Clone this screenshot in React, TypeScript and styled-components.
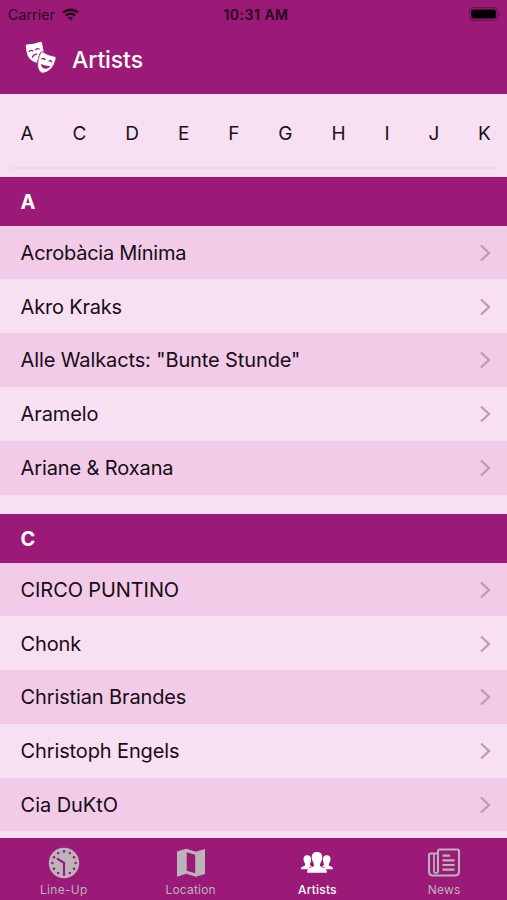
import React from "react";
import styled, { createGlobalStyle } from "styled-components";

const purple = "#9b1a77";
const light = "#f6e0f1";
const rose = "#f1cbe7";
const muted = "#bdb4bb";

const GlobalStyle = createGlobalStyle`
  * { box-sizing: border-box; }
  body { margin: 0; background: ${light}; font-family: Inter, "Liberation Sans", sans-serif; }
`;

const Screen = styled.div`
  display: flex;
  flex-direction: column;
  width: 507px;
  height: 900px;
  overflow: hidden;
  background: ${light};
`;

const StatusBar = styled.div`
  display: grid;
  grid-template-columns: 1fr auto 1fr;
  align-items: center;
  flex: none;
  height: 28px;
  padding: 0 6px 0 8px;
  background: ${purple};
  color: #25051c;
`;

const Carrier = styled.div`
  display: flex;
  align-items: center;
  gap: 7px;
  font-size: 14px;
  letter-spacing: 0.15px;
`;

const Clock = styled.div`
  padding-left: 3px;
  font-size: 14px;
  font-weight: 600;
  letter-spacing: 0.5px;
`;

const Battery = styled.div`
  display: flex;
  justify-content: flex-end;
`;

const TitleBar = styled.header`
  display: flex;
  align-items: center;
  flex: none;
  gap: 14px;
  height: 66px;
  padding: 0 24px 5px;
  background: ${purple};
  color: #fff;
`;

const Title = styled.h1`
  margin: 0;
  padding-top: 2px;
  font-size: 23px;
  font-weight: 500;
  letter-spacing: -0.1px;
`;

const LetterIndex = styled.nav`
  display: flex;
  flex: none;
  justify-content: space-between;
  height: 75px;
  margin: 0 10px 0 11px;
  padding: 25px 6px 0 9.6px;
  border-bottom: 2px solid #efd9e9;
  font-size: 19px;
  line-height: 30px;
  color: #1c0f1a;
`;

const List = styled.main`
  flex: 1;
  min-height: 0;
  padding-top: 8px;
  overflow: hidden;
`;

const Section = styled.section`
  margin-bottom: 19.4px;
`;

const SectionHeader = styled.h2`
  display: flex;
  align-items: center;
  height: 48.7px;
  margin: 0;
  padding: 1px 20.6px 0;
  background: ${purple};
  color: #fff;
  font-size: 20px;
  font-weight: 700;
`;

const ArtistRow = styled.div`
  display: flex;
  align-items: center;
  justify-content: space-between;
  height: 53.78px;
  padding: 0.6px 15.4px 0 20.6px;
  background: ${light};
  &:nth-child(even) { background: ${rose}; }
`;

const ArtistName = styled.span<{ $tracking: number }>`
  font-size: 20px;
  line-height: 26px;
  letter-spacing: ${(p) => p.$tracking}px;
  color: #180c16;
  white-space: pre;
`;

const TabBar = styled.nav`
  display: grid;
  grid-template-columns: repeat(4, 1fr);
  flex: none;
  height: 61.6px;
  background: ${purple};
`;

const Tab = styled.div<{ $active?: boolean }>`
  display: flex;
  flex-direction: column;
  align-items: center;
  padding-top: 9px;
  padding-left: 1px;
  color: ${(p) => (p.$active ? "#fff" : muted)};
`;

const TabLabel = styled.span<{ $active?: boolean; $tracking: number }>`
  margin-top: 2.4px;
  font-size: 12px;
  line-height: 16px;
  font-weight: ${(p) => (p.$active ? 500 : 400)};
  letter-spacing: ${(p) => p.$tracking}px;
`;

const MasksSvg = styled.svg`
  margin-bottom: 2px;
`;

const Wifi = () => (
  <svg width="17" height="13" viewBox="0 0 17 13" fill="none" stroke="currentColor" strokeWidth="2.5">
    <path d="M1 4.7C5.2.7 11.8.7 16 4.7" />
    <path d="M3.9 7.6c2.6-2.4 6.6-2.4 9.2 0" />
    <path d="M8.5 12.3 5.9 9.7c1.4-1.3 3.8-1.3 5.2 0z" fill="currentColor" stroke="none" />
  </svg>
);

const BatteryIcon = () => (
  <svg width="32" height="14" viewBox="0 0 32 14">
    <rect x=".7" y=".7" width="27.6" height="12.6" rx="3.4" fill="none" stroke="#6f1256" strokeWidth="1.2" />
    <rect x="2.2" y="2.4" width="24.6" height="9.2" rx="1.8" fill="#050004" />
    <path d="M29.6 4.9q1.800.6 1.800 2.100t-1.800 2.100z" fill="#6f1256" />
  </svg>
);

const Masks = () => (
  <MasksSvg width="34" height="34" viewBox="0 0 34 34">
    <g fill="#fff">
      <path d="M1.7 4.6Q2 3.700 3 3.500 10 3.200 15.900.9q1.700-.5 2.100 1l1.700 8.900-3.200.3q-1.900 3-2.300 6.400l-1.500 4.300q-6.200-1.600-8.900-6.800Q2.200 11 1.700 4.600z" />
      <path d="M16.700 11.600q.8-1.200 2-.6 5.700 3.500 12.200 4.500 1.300.5 1.100 1.800-1.200 6.500-5.200 10.800-4.300 4.100-8.300 4.100-4.100-1.400-4.900-7.400-.4-6.500 3.100-13.200z" stroke={purple} strokeWidth=".7" />
    </g>
    <g fill="none" stroke={purple} strokeLinecap="round" strokeWidth="1.300">
      <path d="M5.400 10.400q1.400-1.700 3.500-.6M11.800 8.700q1.500-1.600 3.300-.7M8.400 16.200q1.200-2.700 4.300-3" />
      <path d="M18 17.800q1.700-.9 2.900.7M25 20q1.700-.7 2.700.8" />
    </g>
    <path d="M16.700 22.900q4.600 2.300 9.700 2.100-2.200 3.400-5.500 2.600-3.300-.6-4.200-4.700z" fill={purple} />
  </MasksSvg>
);

const Chevron = () => (
  <svg width="13" height="18" viewBox="0 0 13 18" fill="none" stroke="#bd9cb6" strokeWidth="2.300">
    <path d="m2 1.500 8 7.500-8 7.500" />
  </svg>
);

const dots = Array.from({ length: 12 }, (_, i) => {
  const angle = (i * Math.PI) / 6;
  return [16 + 11.6 * Math.sin(angle), 16 - 11.6 * Math.cos(angle)];
});

const ClockIcon = () => (
  <svg width="32" height="32" viewBox="0 0 32 32">
    <circle cx="16" cy="16" r="15.2" fill="currentColor" />
    {dots.map(([x, y], i) => (
      <circle key={i} cx={x} cy={y} r="1.3" fill={purple} />
    ))}
    <path d="M9.700 12 16 15.800V26" fill="none" stroke={purple} strokeWidth="2.200" strokeLinecap="round" />
  </svg>
);

const MapIcon = () => (
  <svg width="32" height="32" viewBox="0 0 32 32">
    <path d="m2 4.500 9.300-2.700 9.500 3L30 2v25l-9.200 2.700-9.500-3L2 29.700z" fill="currentColor" />
    <path d="m11.700 5.200 8.500 2.600v18.500l-8.500-2.600z" fill={purple} />
  </svg>
);

const PeopleIcon = () => (
  <svg width="34" height="32" viewBox="0 0 34 32" fill="currentColor">
    <path d="M7 8.300c3.300 0 4.300 2.300 4.100 4.700-.1 2-1 3-1.100 4.400 0 1.200 1.200 1.500 2.200 1.900-1.500.6-3.200 1.300-3.900 2.900H1c0-2.500 1.100-2.500 3.300-3.200 1.100-.4 1.200-1.800.3-3.300-.8-1.600-1.200-2.600-1.100-4C3.600 9.700 4.600 8.300 7 8.300z" />
    <path d="M27 8.300c-3.300 0-4.300 2.300-4.100 4.700.1 2 1 3 1.100 4.400 0 1.200-1.200 1.500-2.200 1.900 1.500.6 3.200 1.300 3.900 2.900H33c0-2.500-1.100-2.500-3.300-3.200-1.100-.4-1.200-1.800-.3-3.300.8-1.600 1.200-2.600 1.100-4-.1-2-1.100-3.400-3.500-3.400z" />
    <path d="M17 5c4.100 0 5.500 2.700 5.200 6.300-.1 1.100-.4 2-.9 2.900-.3.900-.6 1.700-1.200 2.500-.3 1.500-.1 2.600 1.600 3.200 3.100 1.100 5.200 1.400 5.200 5.900H7.100c0-4.500 2.100-4.800 5.200-5.900 1.700-.6 1.900-1.700 1.600-3.200-.6-.8-.9-1.600-1.200-2.500-.5-.9-.8-1.800-.9-2.900C11.500 7.700 12.900 5 17 5z" />
  </svg>
);

const NewsIcon = () => (
  <svg width="34" height="32" viewBox="0 0 34 32" fill="none" stroke="currentColor" strokeWidth="2">
    <path d="M11 25V4q0-1.500 1.500-1.500h18Q32 2.500 32 4v20.500q0 4-4 4H6q-4 0-4-4V8q0-1.500 1.500-1.500H11" />
    <path d="M7 6.500V24q0 2.200 2 2.200t2-2.200" strokeWidth="1.700" />
    <path d="M15.500 8.600H23M15.500 13.300h12M15.500 18h12M15.500 22.700h12" strokeWidth="2.200" />
  </svg>
);

const letters = ["A", "C", "D", "E", "F", "G", "H", "I", "J", "K"];

const sections: { letter: string; artists: [string, number][] }[] = [
  {
    letter: "A",
    artists: [
      ["Acrobàcia Mínima", -0.25],
      ["Akro Kraks", -0.2],
      ['Alle Walkacts: "Bunte Stunde"', -0.12],
      ["Aramelo", -0.1],
      ["Ariane & Roxana", -0.12],
    ],
  },
  {
    letter: "C",
    artists: [
      ["CIRCO PUNTINO", -0.1],
      ["Chonk", -0.15],
      ["Christian Brandes", -0.13],
      ["Christoph Engels", -0.13],
      ["Cia DuKtO", -0.05],
    ],
  },
];

const tabs = [
  { label: "Line-Up", Icon: ClockIcon, tracking: 0.3 },
  { label: "Location", Icon: MapIcon, tracking: 0.2 },
  { label: "Artists", Icon: PeopleIcon, tracking: 0.2, active: true },
  { label: "News", Icon: NewsIcon, tracking: 0.2 },
];

export default function App() {
  return (
    <Screen>
      <GlobalStyle />
      <StatusBar>
        <Carrier>Carrier<Wifi /></Carrier>
        <Clock>10:31 AM</Clock>
        <Battery><BatteryIcon /></Battery>
      </StatusBar>
      <TitleBar>
        <Masks />
        <Title>Artists</Title>
      </TitleBar>
      <LetterIndex>
        {letters.map((l) => <span key={l}>{l}</span>)}
      </LetterIndex>
      <List>
        {sections.map(({ letter, artists }) => (
          <Section key={letter}>
            <SectionHeader>{letter}</SectionHeader>
            {artists.map(([name, tracking]) => (
              <ArtistRow key={name}>
                <ArtistName $tracking={tracking}>{name}</ArtistName>
                <Chevron />
              </ArtistRow>
            ))}
          </Section>
        ))}
      </List>
      <TabBar>
        {tabs.map(({ label, Icon, tracking, active }) => (
          <Tab key={label} $active={active}>
            <Icon />
            <TabLabel $active={active} $tracking={tracking}>{label}</TabLabel>
          </Tab>
        ))}
      </TabBar>
    </Screen>
  );
}
